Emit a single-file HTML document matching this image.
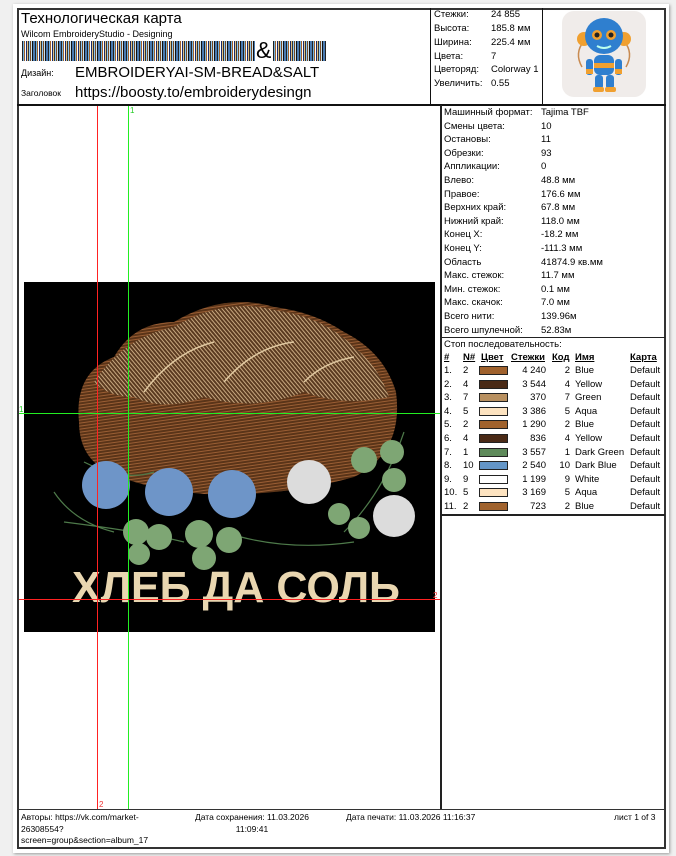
<!DOCTYPE html>
<html><head><meta charset="utf-8"><style>
*{margin:0;padding:0;box-sizing:border-box}
body{width:676px;height:856px;background:#f0f0f0;position:relative;overflow:hidden;font-family:"Liberation Sans",Arial,sans-serif;color:#000}
.a{position:absolute}
.page{left:13px;top:4px;width:656px;height:849px;background:#fff;box-shadow:1px 1px 3px #999}
.t{position:absolute;font-size:9.5px;white-space:nowrap;line-height:11px}
.sw{position:absolute;width:29px;height:9px;border:1px solid #222}
</style></head><body>
<div class="a page"></div>
<div class="a" style="left:17px;top:8px;width:649px;height:841px;border:2px solid #333"></div>
<div class="a" style="left:17px;top:104px;width:649px;height:2px;background:#111"></div>
<div class="a" style="left:430px;top:8px;width:1px;height:97px;background:#111"></div>
<div class="a" style="left:542px;top:8px;width:1px;height:97px;background:#111"></div>
<div class="t" style="left:21px;top:10px;font-size:15px;line-height:17px">Технологическая карта</div>
<div class="t" style="left:21px;top:29px;font-size:9px">Wilcom EmbroideryStudio - Designing</div>
<div class="a" style="left:22px;top:41px;width:233px;height:20px;background:repeating-linear-gradient(90deg,#222 0 1px,#6fb0e0 1px 2px,#a0622d 2px 3px,#fff 3px 4px,#1a2b6a 4px 5px,#e0c080 5px 6px,#333 6px 7px,#90c8f0 7px 8px,#7a4a20 8px 9px,#c8e0f0 9px 10px,#111 10px 11px,#4a7ab0 11px 13px)"></div>
<div class="t" style="left:256px;top:37px;font-size:23px;line-height:26px">&amp;</div>
<div class="a" style="left:273px;top:41px;width:53px;height:20px;background:repeating-linear-gradient(90deg,#222 0 1px,#6fb0e0 1px 2px,#a0622d 2px 3px,#fff 3px 4px,#1a2b6a 4px 5px,#e0c080 5px 6px,#333 6px 7px,#90c8f0 7px 8px,#7a4a20 8px 9px,#c8e0f0 9px 10px,#111 10px 11px,#4a7ab0 11px 13px)"></div>
<div class="t" style="left:21px;top:68px;font-size:9px">Дизайн:</div>
<div class="t" style="left:75px;top:64px;font-size:15px;line-height:18px">EMBROIDERYAI-SM-BREAD&amp;SALT</div>
<div class="t" style="left:21px;top:88px;font-size:8.5px">Заголовок</div>
<div class="t" style="left:75px;top:84px;font-size:15px;line-height:18px">https://boosty.to/embroiderydesingn</div>
<div class="t" style="left:434px;top:9px">Стежки:</div><div class="t" style="left:491px;top:9px">24 855</div>
<div class="t" style="left:434px;top:23px">Высота:</div><div class="t" style="left:491px;top:23px">185.8 мм</div>
<div class="t" style="left:434px;top:37px">Ширина:</div><div class="t" style="left:491px;top:37px">225.4 мм</div>
<div class="t" style="left:434px;top:51px">Цвета:</div><div class="t" style="left:491px;top:51px">7</div>
<div class="t" style="left:434px;top:64px">Цветоряд:</div><div class="t" style="left:491px;top:64px">Colorway 1</div>
<div class="t" style="left:434px;top:78px">Увеличить:</div><div class="t" style="left:491px;top:78px">0.55</div>
<div class="a" style="left:562px;top:11px;width:84px;height:86px;background:#f0ecea;border-radius:12px"></div>
<svg class="a" style="left:562px;top:11px" width="84" height="86" viewBox="0 0 84 86">
<path d="M22 30 Q12 42 20 56 M62 30 Q72 42 64 56" stroke="#c88a50" stroke-width="1.5" fill="none"/>
<circle cx="22" cy="28" r="7" fill="#f0a030"/><circle cx="62" cy="28" r="7" fill="#f0a030"/>
<ellipse cx="42" cy="25" rx="19" ry="18" fill="#2f7fcf"/>
<circle cx="35" cy="24" r="5" fill="#f0a030"/><circle cx="49" cy="24" r="5" fill="#f0a030"/>
<circle cx="35" cy="24" r="2.5" fill="#222"/><circle cx="49" cy="24" r="2.5" fill="#222"/>
<path d="M35 35 Q42 39 49 35" stroke="#bfe" stroke-width="2" fill="none"/>
<rect x="32" y="44" width="20" height="20" rx="6" fill="#2f7fcf"/>
<rect x="32" y="52" width="20" height="5" fill="#f0a030"/>
<rect x="24" y="48" width="7" height="16" rx="3" fill="#2f7fcf"/><rect x="53" y="48" width="7" height="16" rx="3" fill="#2f7fcf"/>
<rect x="24" y="58" width="7" height="5" fill="#f0a030"/><rect x="53" y="58" width="7" height="5" fill="#f0a030"/>
<rect x="33" y="64" width="8" height="14" rx="3" fill="#2f7fcf"/><rect x="44" y="64" width="8" height="14" rx="3" fill="#2f7fcf"/>
<rect x="31" y="76" width="11" height="5" rx="2" fill="#f0a030"/><rect x="43" y="76" width="11" height="5" rx="2" fill="#f0a030"/>
</svg>
<div class="a" style="left:440px;top:105px;width:2px;height:705px;background:#222"></div>
<div class="a" style="left:441px;top:337px;width:224px;height:1px;background:#222"></div>
<div class="a" style="left:441px;top:514px;width:224px;height:2px;background:#222"></div>
<div id="rp"></div>
<div class="a" style="left:17px;top:809px;width:649px;height:1px;background:#333"></div>
<div class="t" style="left:21px;top:812px;font-size:8.5px;line-height:11.5px">Авторы: https://vk.com/market-<br>26308554?<br>screen=group&amp;section=album_17</div>
<div class="t" style="left:195px;top:812px;font-size:8.5px;line-height:11.5px;text-align:center">Дата сохранения: 11.03.2026<br>11:09:41</div>
<div class="t" style="left:346px;top:812px;font-size:8.5px">Дата печати: 11.03.2026 11:16:37</div>
<div class="t" style="left:614px;top:812px;font-size:8.5px">лист 1 of 3</div>
<svg class="a" style="left:24px;top:282px" width="411" height="350" viewBox="0 0 411 350">
<rect width="411" height="350" fill="#000"/>
<defs><pattern id="st" width="4" height="3" patternUnits="userSpaceOnUse" patternTransform="rotate(-8)"><rect width="4" height="3" fill="#5a3418"/><rect width="4" height="1" fill="#9a5e34"/></pattern>
<pattern id="st2" width="3" height="3" patternUnits="userSpaceOnUse" patternTransform="rotate(50)"><rect width="3" height="3" fill="#5a3a20"/><rect width="3" height="1" fill="#c8a880"/></pattern></defs>
<path d="M55 140 Q50 90 90 75 Q110 40 150 40 Q200 10 250 25 Q290 30 320 50 Q360 70 372 110 Q380 170 330 195 Q260 215 180 212 Q100 205 70 180 Q55 165 55 140Z" fill="url(#st)"/>
<path d="M70 100 Q100 55 150 45 Q200 15 250 28 Q300 35 330 65 Q355 85 365 115 Q320 125 280 110 Q230 130 180 115 Q140 130 110 115 Q85 115 70 100Z" fill="url(#st2)"/>
<path d="M120 110 Q150 70 190 60 M200 100 Q230 65 270 60 M280 100 Q300 80 330 75" stroke="#e0c8a0" stroke-width="1.5" fill="none"/>
<path d="M60 180 Q100 200 130 190 M380 150 Q360 210 320 250 M40 240 Q120 250 160 260 M200 250 Q260 270 330 260 M30 210 Q50 240 90 250" stroke="#4e7a4a" stroke-width="1.2" fill="none"/>
<g fill="#6e95c8"><circle cx="82" cy="203" r="24"/><circle cx="145" cy="210" r="24"/><circle cx="208" cy="212" r="24"/></g>
<g fill="#dcdcdc"><circle cx="285" cy="200" r="22"/><circle cx="370" cy="234" r="21"/></g>
<g fill="#7ea674"><circle cx="112" cy="250" r="13"/><circle cx="135" cy="255" r="13"/><circle cx="175" cy="252" r="14"/><circle cx="205" cy="258" r="13"/><circle cx="180" cy="276" r="12"/><circle cx="340" cy="178" r="13"/><circle cx="368" cy="170" r="12"/><circle cx="370" cy="198" r="12"/><circle cx="315" cy="232" r="11"/><circle cx="335" cy="246" r="11"/><circle cx="115" cy="272" r="11"/></g>
<text x="48" y="320" font-family="Liberation Sans Narrow,Liberation Sans,sans-serif" font-size="44" font-weight="bold" fill="#e9d6b0" textLength="328" lengthAdjust="spacingAndGlyphs">ХЛЕБ ДА СОЛЬ</text>
</svg>
<div class="a" style="left:97px;top:106px;width:1px;height:703px;background:#f22"></div>
<div class="a" style="left:128px;top:106px;width:1px;height:703px;background:#2e2"></div>
<div class="a" style="left:19px;top:413px;width:421px;height:1px;background:#2e2"></div>
<div class="a" style="left:19px;top:599px;width:421px;height:1px;background:#f22"></div>
<div class="t" style="left:130px;top:105px;font-size:8px;color:#2c2">1</div>
<div class="t" style="left:19px;top:404px;font-size:8px;color:#2c2">1</div>
<div class="t" style="left:99px;top:799px;font-size:8px;color:#e33">2</div>
<div class="t" style="left:433px;top:590px;font-size:8px;color:#e33">2</div>
<script>
var rp=document.getElementById('rp'),h='';
var L=[["Машинный формат:","Tajima TBF"],["Смены цвета:","10"],["Остановы:","11"],["Обрезки:","93"],["Аппликации:","0"],["Влево:","48.8 мм"],["Правое:","176.6 мм"],["Верхних край:","67.8 мм"],["Нижний край:","118.0 мм"],["Конец X:","-18.2 мм"],["Конец Y:","-111.3 мм"],["Область","41874.9 кв.мм"],["Макс. стежок:","11.7 мм"],["Мин. стежок:","0.1 мм"],["Макс. скачок:","7.0 мм"],["Всего нити:","139.96м"],["Всего шпулечной:","52.83м"]];
L.forEach(function(r,i){var y=107+i*13.6;h+='<div class="t" style="left:444px;top:'+y+'px">'+r[0]+'</div><div class="t" style="left:541px;top:'+y+'px">'+r[1]+'</div>';});
h+='<div class="t" style="left:444px;top:339px">Стоп последовательность:</div>';
var u='text-decoration:underline;font-weight:bold;';
h+='<div class="t" style="left:444px;top:352px;'+u+'">#</div><div class="t" style="left:463px;top:352px;'+u+'">N#</div><div class="t" style="left:481px;top:352px;'+u+'">Цвет</div><div class="t" style="left:511px;top:352px;'+u+'">Стежки</div><div class="t" style="left:552px;top:352px;'+u+'">Код</div><div class="t" style="left:575px;top:352px;'+u+'">Имя</div><div class="t" style="left:630px;top:352px;'+u+'">Карта</div>';
var S=[["1.","2","#a0622d","4 240","2","Blue"],["2.","4","#4a2a16","3 544","4","Yellow"],["3.","7","#b89060","370","7","Green"],["4.","5","#fde3c0","3 386","5","Aqua"],["5.","2","#a0622d","1 290","2","Blue"],["6.","4","#4a2a16","836","4","Yellow"],["7.","1","#5e8a5a","3 557","1","Dark Green"],["8.","10","#6496c8","2 540","10","Dark Blue"],["9.","9","#ffffff","1 199","9","White"],["10.","5","#fde3c0","3 169","5","Aqua"],["11.","2","#a0622d","723","2","Blue"]];
S.forEach(function(r,i){var y=365+i*13.6;h+='<div class="t" style="left:444px;top:'+y+'px">'+r[0]+'</div><div class="t" style="left:463px;top:'+y+'px">'+r[1]+'</div><div class="sw" style="left:479px;top:'+(y+1)+'px;background:'+r[2]+'"></div><div class="t" style="left:508px;top:'+y+'px;width:38px;text-align:right">'+r[3]+'</div><div class="t" style="left:552px;top:'+y+'px;width:18px;text-align:right">'+r[4]+'</div><div class="t" style="left:575px;top:'+y+'px">'+r[5]+'</div><div class="t" style="left:630px;top:'+y+'px">Default</div>';});
rp.innerHTML=h;
</script>
</body></html>
